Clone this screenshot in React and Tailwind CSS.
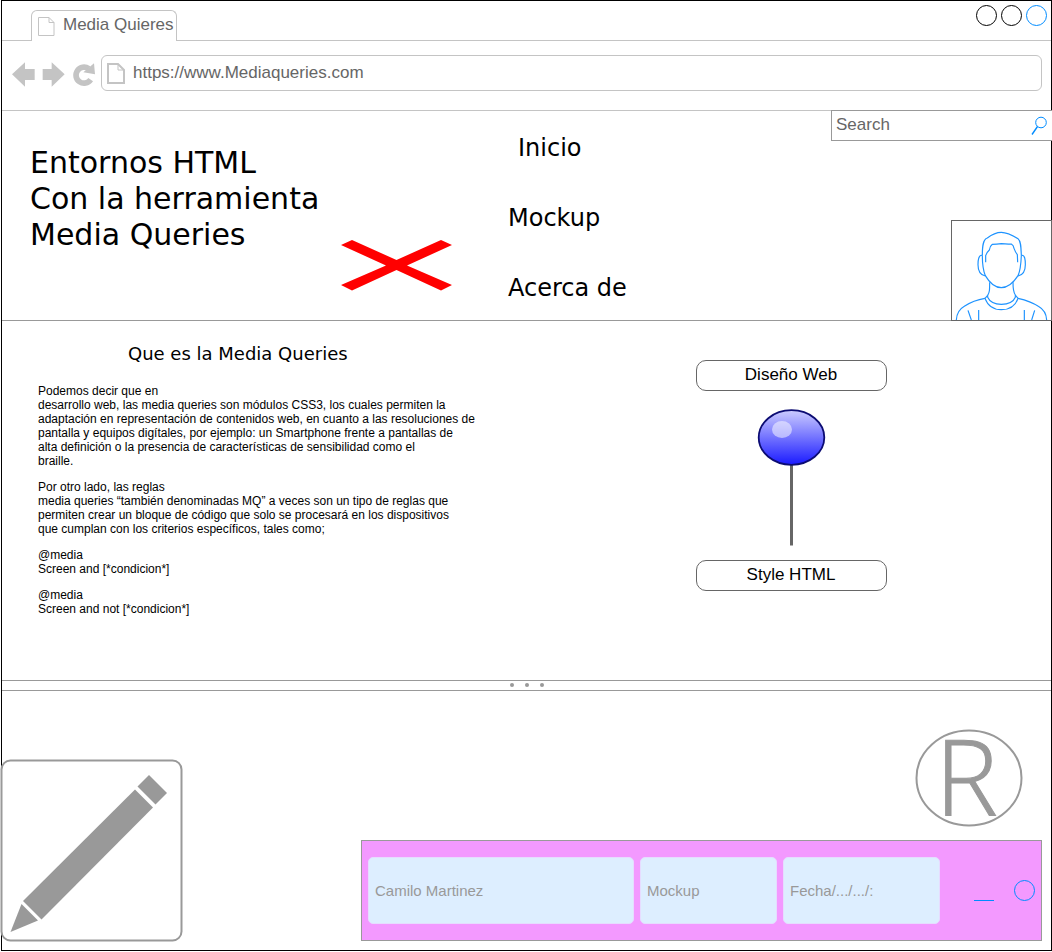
import React from "react";

const sans = "font-['Liberation_Sans',Arial,sans-serif]";
const wide = "font-['DejaVu_Sans',Verdana,sans-serif]";

function TitleBar() {
  return (
    <div className="flex h-10 items-stretch">
      <div className="w-[29px] border-b border-[#c4c4c4]" />
      <div className="mt-[9px] flex items-center gap-2 rounded-t-md border border-b-0 border-[#c4c4c4] pr-0.5 pl-1.5">
        <svg className="h-5 w-[17px]" viewBox="0 0 17 20" fill="none" stroke="#c4c4c4" aria-hidden="true">
          <path d="M.5 1.500H11L16 6.500V19.500H.5Z M11 1.500V6.500H16" />
        </svg>
        <span className="pb-0.5 text-[17px] leading-5 whitespace-nowrap text-[#666]">Media Quieres</span>
      </div>
      <div className="flex flex-1 items-start justify-end gap-1 border-b border-[#c4c4c4] pt-1 pr-1">
        <button type="button" aria-label="Minimizar" className="size-[21px] rounded-full border border-black" />
        <button type="button" aria-label="Maximizar" className="size-[21px] rounded-full border border-black" />
        <button type="button" aria-label="Cerrar" className="size-[21px] rounded-full border border-[#008cff]" />
      </div>
    </div>
  );
}

function Toolbar() {
  return (
    <div className="flex h-[70px] items-start border-b border-[#c4c4c4] pt-3.5 pr-[9px] pl-2.5">
      <div className="flex h-9 items-center gap-1.5 pt-[3px] text-[#c4c4c4]">
        <button type="button" aria-label="Atrás">
          <svg className="h-[25px] w-6" viewBox="36 186 72 75" fill="currentColor">
            <path d="M36 223 75 187V207H104V240H75V260Z" />
          </svg>
        </button>
        <button type="button" aria-label="Adelante">
          <svg className="h-[25px] w-6" viewBox="126 186 72 75" fill="currentColor">
            <path d="M194 223 155 187V207H128V240H155V260Z" />
          </svg>
        </button>
        <button type="button" aria-label="Recargar">
          <svg className="h-[25px] w-6" viewBox="216 186 72 75" fill="none" stroke="currentColor">
            <path d="M272 239A24 24 0 1 1 266 206" strokeWidth="17" />
            <path d="M282 190 285 223 250 217Z" fill="currentColor" stroke="none" />
          </svg>
        </button>
      </div>
      <label className="ml-[5px] flex h-9 flex-1 items-center gap-2 rounded-md border border-[#c4c4c4] pl-[5px]">
        <svg className="h-[21px] w-[18px]" viewBox="0 0 18 21" fill="none" stroke="#c4c4c4" strokeWidth="2" aria-hidden="true">
          <path d="M1 1H11L17 7V20H1Z" />
          <path d="M11 1V7H17" strokeWidth="1" />
        </svg>
        <input
          type="text"
          aria-label="Dirección"
          defaultValue="https://www.Mediaqueries.com"
          className="h-8 min-w-0 flex-1 bg-transparent text-[17px] text-[#666] outline-none"
        />
      </label>
    </div>
  );
}

function Avatar() {
  return (
    <div className="-mr-px -mb-px size-[101px] border border-[#666] bg-white">
      <svg className="block size-full" viewBox="66 33 297 297" fill="none" stroke="#1e93ff" strokeWidth="3.5" aria-label="Avatar" role="img">
        <path d="M157 137C157 112 158 88 172 84C186 73 198 67 214 67C232 67 246 75 264 86C273 94 273 110 274 137" />
        <path d="M167 157V137Q170 127 178 120Q180 108 187 103Q200 103 214 101Q232 103 244 102Q251 106 252 115Q256 126 262 134L263 157" />
        <path d="M157 136C146 134 144 150 144 164C144 184 152 195 166 198" />
        <path d="M274 136C285 134 286 150 286 164C286 184 278 195 264 198" />
        <path d="M157 137C157 160 160 182 166 197C180 221 195 233 214 233C236 233 250 219 264 197C271 182 273 160 274 137" />
        <path d="M179 217C179 240 179 246 173 256V262C180 277 196 283 214 283C236 283 250 276 256 262V255C249 246 249 236 249 217" />
        <path d="M173 256 165 265C174 289 190 299 214 299C240 299 256 289 264 265L256 255" />
        <path d="M165 265C145 268 122 276 103 289C87 298 80 310 79 330" />
        <path d="M264 265C286 270 306 276 325 289C341 298 349 310 350 330" />
        <path d="M114 301 124 330M146 300V330M283 300V330M314 301 305 330" />
      </svg>
    </div>
  );
}

function Header() {
  return (
    <header className={`grid h-[210px] grid-cols-[339px_167px_1fr] border-b border-[#999] ${wide}`}>
      <h1 className="pt-[34px] pl-7 text-[30px] leading-9 whitespace-nowrap">
        Entornos HTML
        <br />
        Con la herramienta
        <br />
        Media Queries
      </h1>
      <div className="pt-[129px]">
        <svg className="h-[51px] w-[111px]" viewBox="0 0 111 51" fill="#f00" aria-hidden="true">
          <path d="M0 5 11 0 55.500 20 100 0 111 5 66 25.500 111 45 100 50.500 55.500 30 11 50.500 0 45 45 25.500Z" />
        </svg>
      </div>
      <div className="flex items-stretch justify-between">
        <nav className="flex flex-col gap-10 pt-[22px] text-[24px] leading-[30px]">
          <a href="#inicio" className="pl-2.5">Inicio</a>
          <a href="#mockup">Mockup</a>
          <a href="#acerca">Acerca de</a>
        </nav>
        <div className="flex flex-col items-end justify-between">
          <label className={`-mt-px -mr-px flex h-[31px] w-[221px] items-center border border-r-0 border-[#999] bg-white pr-[5px] pl-1 ${sans}`}>
            <input
              type="search"
              aria-label="Search"
              placeholder="Search"
              className="min-w-0 flex-1 bg-transparent pb-0.5 text-[17px] leading-5 outline-none placeholder:text-[#666]"
            />
            <svg className="h-5 w-4" viewBox="0 0 16 20" fill="none" stroke="#008cff" aria-hidden="true">
              <circle cx="10" cy="6.500" r="5.300" />
              <path d="M6.500 10.500 1 18.500" strokeWidth="1.400" />
            </svg>
          </label>
          <Avatar />
        </div>
      </div>
    </header>
  );
}

function Article() {
  return (
    <article className="pt-[22px] pl-9">
      <h2 className={`pl-[90px] text-[18px] leading-[22px] ${wide}`}>Que es la Media Queries</h2>
      <div className="mt-[19px] flex flex-col gap-3 text-[12px] leading-[14px] whitespace-nowrap">
        <p>
          Podemos decir que en
          <br />
          desarrollo web, las media queries son módulos CSS3, los cuales permiten la
          <br />
          adaptación en representación de contenidos web, en cuanto a las resoluciones de
          <br />
          pantalla y equipos digítales, por ejemplo: un Smartphone frente a pantallas de
          <br />
          alta definición o la presencia de características de sensibilidad como el
          <br />
          braille.
        </p>
        <p>
          Por otro lado, las reglas
          <br />
          media queries “también denominadas MQ” a veces son un tipo de reglas que
          <br />
          permiten crear un bloque de código que solo se procesará en los dispositivos
          <br />
          que cumplan con los criterios específicos, tales como;
        </p>
        <p>
          @media
          <br />
          Screen and [*condicion*]
        </p>
        <p>
          @media
          <br />
          Screen and not [*condicion*]
        </p>
      </div>
    </article>
  );
}

function PinColumn() {
  const box = "h-[31px] w-[191px] rounded-[10px] border border-[#666] pb-0.5 text-[17px] leading-5";
  return (
    <section className="flex flex-col items-center pt-[39px]">
      <button type="button" className={box}>Diseño Web</button>
      <svg className="mt-[17px] mb-3.5 h-[138px] w-[69px]" viewBox="0 0 69 138" aria-hidden="true">
        <defs>
          <linearGradient id="pin" x1="0" y1="0" x2="0" y2="1">
            <stop offset="0" stopColor="#ccccff" />
            <stop offset="1" stopColor="#1a1aff" />
          </linearGradient>
        </defs>
        <path d="M34.500 57V137.500" stroke="#666" strokeWidth="3" />
        <ellipse cx="34.500" cy="29.500" rx="32.800" ry="27.300" fill="url(#pin)" stroke="#0c0c73" strokeWidth="1.800" />
        <ellipse cx="25" cy="21.500" rx="10" ry="8.500" fill="#fff" fillOpacity=".5" />
      </svg>
      <button type="button" className={box}>Style HTML</button>
    </section>
  );
}

function Splitter() {
  return (
    <div className="flex h-2.5 items-center justify-center gap-[11px] border-b border-[#999] pb-px">
      <span className="size-1 rounded-full bg-[#999]" />
      <span className="size-1 rounded-full bg-[#999]" />
      <span className="size-1 rounded-full bg-[#999]" />
    </div>
  );
}

function Footer() {
  const field =
    "h-[67px] w-full min-w-0 rounded-[5px] border border-[#e6dcff] bg-[#ddeeff] px-1.5 text-[15px] outline-none placeholder:text-[#999]";
  return (
    <footer className="flex h-[259px] items-end justify-between pr-[9px] pb-[9px]">
      <svg className="-mb-px -ml-0.5 size-[183px] shrink-0" viewBox="0 0 183 183" aria-hidden="true">
        <rect x="1.500" y="1.500" width="180" height="180" rx="9" fill="#fff" stroke="#999" strokeWidth="2" />
        <g fill="#999">
          <path d="M149 16 167 34 155.500 45.500 137.500 27.500Z" />
          <path d="M135 30.500 153 48.500 41.500 160.500 23 142Z" />
          <path d="M21.500 145 38 161.500 10.500 173Z" />
        </g>
      </svg>
      <div className="flex max-w-[681px] flex-1 flex-col items-end gap-[13px]">
        <svg className="mr-[19px] h-[98px] w-[108px] overflow-visible" viewBox="0 0 108 98" role="img" aria-label="Marca registrada">
          <ellipse cx="54" cy="49" rx="52.500" ry="47.500" fill="none" stroke="#999" strokeWidth="2" />
          <text x="20" y="87" fontSize="106" fill="#999" stroke="#999" className="font-['Open_Sans',sans-serif] font-light">R</text>
        </svg>
        <form className="flex h-[101px] w-full items-center border border-[#999] bg-[#f399ff] px-1.5">
          <div className="grid flex-1 grid-cols-[266fr_137fr_157fr] gap-1.5">
            <input type="text" aria-label="Nombre" placeholder="Camilo Martinez" className={field} />
            <input type="text" aria-label="Proyecto" placeholder="Mockup" className={field} />
            <input type="text" aria-label="Fecha" placeholder="Fecha/.../.../:" className={field} />
          </div>
          <div className="flex items-center gap-5 pl-[34px]">
            <button type="button" aria-label="Contraer" className="h-[21px] w-5 border-b border-[#008cff]" />
            <button type="button" aria-label="Aceptar" className="size-[21px] rounded-full border border-[#008cff]" />
          </div>
        </form>
      </div>
    </footer>
  );
}

export default function App() {
  return (
    <div className="bg-white pb-px pl-px">
      <div className={`border border-black text-black ${sans}`}>
        <TitleBar />
        <Toolbar />
        <Header />
        <main className="grid h-[360px] grid-cols-[529fr_520fr] border-b border-[#999]">
          <Article />
          <PinColumn />
        </main>
        <Splitter />
        <Footer />
      </div>
    </div>
  );
}
